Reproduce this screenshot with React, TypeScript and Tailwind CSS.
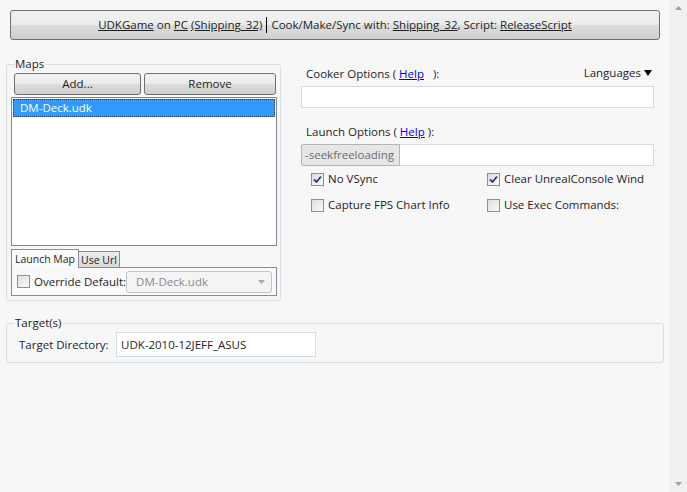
import React from "react";

const font = { fontFamily: '"Open Sans", "Noto Sans", sans-serif' };

const Check = ({ checked }: { checked?: boolean }) => (
  <span className="flex h-[13px] w-[13px] shrink-0 items-center justify-center border border-[#8e8f8f] bg-[linear-gradient(135deg,#dcdcdc,#fbfbfb)]">
    {checked && (
      <svg width="9" height="9" viewBox="0 0 9 9">
        <path d="M1 4.5 L3.5 7 L8 1.5" fill="none" stroke="#2a3e6e" strokeWidth="1.8" />
      </svg>
    )}
  </span>
);

const CheckRow = ({ label, checked }: { label: string; checked?: boolean }) => (
  <div className="flex items-center gap-[4px] whitespace-nowrap">
    <Check checked={checked} />
    <span>{label}</span>
  </div>
);

const WinButton = ({ children, className }: { children: React.ReactNode; className?: string }) => (
  <div
    className={
      "flex items-center justify-center whitespace-nowrap rounded-[3px] border border-[#707070] bg-[linear-gradient(#f2f2f2_0%,#ebebeb_50%,#dddddd_51%,#cfcfcf_100%)] text-[#1e1e1e] " +
      (className ?? "")
    }
  >
    {children}
  </div>
);

const Link = ({ children }: { children: React.ReactNode }) => <span className="underline">{children}</span>;

export default function App() {
  return (
    <div className="flex h-[492px] w-[687px] overflow-hidden bg-[#f7f7f7] text-[11.5px] leading-[16px] text-[#1e1e1e]" style={font}>
      <div className="flex flex-1 flex-col">
        {/* header button */}
        <WinButton className="ml-[10px] mt-[10px] h-[30px] w-[650px] gap-[4px]">
          <span>
            <Link>UDKGame</Link> on <Link>PC</Link> <Link>(Shipping_32)</Link>
          </span>
          <span className="h-[16px] w-px bg-black" />
          <span>
            Cook/Make/Sync with: <Link>Shipping_32</Link>, Script: <Link>ReleaseScript</Link>
          </span>
        </WinButton>

        <div className="mt-[17px] flex">
          {/* Maps group */}
          <fieldset className="ml-[6px] w-[275px] rounded-[3px] border border-[#d5dfe5] pb-[4px] pl-[4px]">
            <legend className="ml-[3px] px-[1px] leading-[14px]">Maps</legend>
            <div className="ml-[3px] mt-[2px] flex gap-[3px]">
              <WinButton className="h-[22px] w-[127px]">Add...</WinButton>
              <WinButton className="h-[22px] w-[132px]">Remove</WinButton>
            </div>
            <div className="mt-[2px] h-[149px] w-[266px] border border-[#828790] bg-white p-px">
              <div className="h-[18px] border border-dotted border-[#1d3b6b] bg-[#3399ff] pl-[6px] leading-[16px] text-white">
                DM-Deck.udk
              </div>
            </div>
            <div className="mt-[3px] flex items-end text-[10.5px]">
              <div className="relative z-10 -mb-px flex h-[19px] w-[68px] items-center justify-center border border-b-0 border-[#898c95] bg-[#fbfbfb]">
                Launch Map
              </div>
              <div className="flex h-[16px] w-[41px] items-center justify-center border border-b-0 border-l-0 border-[#898c95] bg-[linear-gradient(#ececec,#d9d9d9)]">
                Use Url
              </div>
            </div>
            <div className="flex h-[29px] w-[266px] items-center whitespace-nowrap border border-[#898c95] bg-[#f9f9f9] pl-[5px]">
              <Check />
              <span className="ml-[4px]">Override Default:</span>
              <div className="ml-auto mr-[4px] flex h-[22px] w-[146px] items-center justify-between rounded-[3px] border border-[#c1c4c6] bg-[#f4f4f4] pl-[9px] pr-[6px] text-[#8a8a8a]">
                <span>DM-Deck.udk</span>
                <svg width="7" height="4" viewBox="0 0 7 4">
                  <path d="M0 0 H7 L3.5 4 Z" fill="#a8a8a8" />
                </svg>
              </div>
            </div>
          </fieldset>

          {/* right panel */}
          <div className="ml-[20px] mt-[9px] flex w-[353px] flex-col">
            <div className="flex items-center justify-between pl-[5px]">
              <span>
                Cooker Options ( <span className="text-[#0000ee] underline">Help</span>&nbsp;&nbsp;&nbsp;):
              </span>
              <span className="-mt-[3px] flex items-center gap-[3px] pr-[2px]">
                Languages
                <svg width="8" height="6" viewBox="0 0 8 6">
                  <path d="M0 0 H8 L4 6 Z" fill="#000" />
                </svg>
              </span>
            </div>
            <div className="mt-[4px] h-[22px] w-[353px] border border-[#d2dce2] bg-white" />
            <div className="mt-[16px] pl-[5px]">
              Launch Options ( <span className="text-[#0000ee] underline">Help</span> ):
            </div>
            <div className="mt-[4px] flex h-[22px]">
              <div className="flex w-[99px] items-center whitespace-nowrap rounded-l-[2px] border border-[#b5b5b5] bg-[#e6e6e6] pl-[3px] text-[#6d6d6d]">
                -seekfreeloading
              </div>
              <div className="flex-1 border border-l-0 border-[#d2dce2] bg-white" />
            </div>
            <div className="mt-[5px] grid grid-cols-[176px_166px] gap-y-[10px] pl-[10px]">
              <CheckRow label="No VSync" checked />
              <CheckRow label="Clear UnrealConsole Wind" checked />
              <CheckRow label="Capture FPS Chart Info" />
              <CheckRow label="Use Exec Commands:" />
            </div>
          </div>
        </div>

        {/* Targets group */}
        <fieldset className="ml-[6px] mt-[15px] w-[658px] rounded-[3px] border border-[#d5dfe5] pb-[5px] pl-[4px]">
          <legend className="ml-[3px] px-[1px] leading-[14px]">Target(s)</legend>
          <div className="mt-[2px] flex items-center">
            <span className="ml-[8px] w-[97px]">Target Directory:</span>
            <div className="flex h-[25px] w-[200px] items-center border border-[#d2dce2] bg-white pl-[4px]">
              UDK-2010-12JEFF_ASUS
            </div>
          </div>
        </fieldset>
      </div>

      {/* scrollbar */}
      <div className="flex w-[17px] flex-col items-center justify-between bg-[#f0f0f0] py-[6px]">
        <svg width="7" height="4" viewBox="0 0 7 4">
          <path d="M0 4 H7 L3.5 0 Z" fill="#a0a0a0" />
        </svg>
        <svg width="7" height="4" viewBox="0 0 7 4">
          <path d="M0 0 H7 L3.5 4 Z" fill="#a0a0a0" />
        </svg>
      </div>
    </div>
  );
}
